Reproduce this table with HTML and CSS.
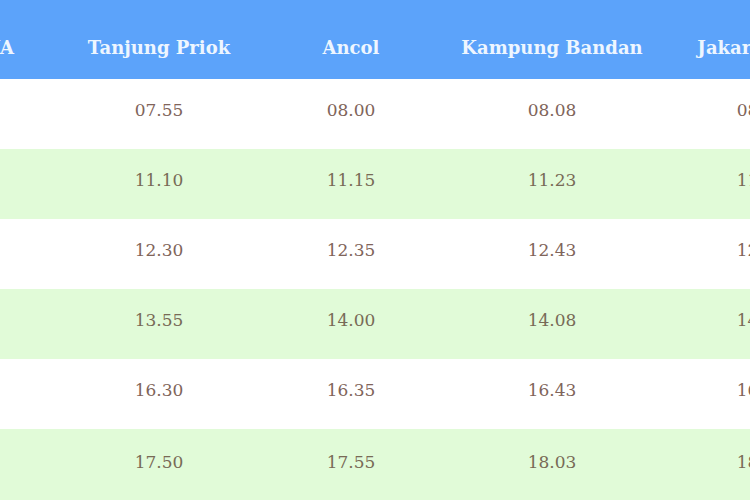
FILE: index.html
```html
<!DOCTYPE html>
<html>
<head>
<meta charset="utf-8">
<link rel="stylesheet" href="styles.css">
</head>
<body>
<div class="viewport">
  <div class="schedule">
    <div class="row head">
      <div class="cell">Nomor KA</div>
      <div class="cell">Tanjung Priok</div>
      <div class="cell">Ancol</div>
      <div class="cell">Kampung Bandan</div>
      <div class="cell">Jakarta Kota</div>
    </div>
    <div class="row">
      <div class="cell">1771</div>
      <div class="cell">07.55</div>
      <div class="cell">08.00</div>
      <div class="cell">08.08</div>
      <div class="cell">08.15</div>
    </div>
    <div class="row alt">
      <div class="cell">1773</div>
      <div class="cell">11.10</div>
      <div class="cell">11.15</div>
      <div class="cell">11.23</div>
      <div class="cell">11.30</div>
    </div>
    <div class="row">
      <div class="cell">1775</div>
      <div class="cell">12.30</div>
      <div class="cell">12.35</div>
      <div class="cell">12.43</div>
      <div class="cell">12.50</div>
    </div>
    <div class="row alt">
      <div class="cell">1777</div>
      <div class="cell">13.55</div>
      <div class="cell">14.00</div>
      <div class="cell">14.08</div>
      <div class="cell">14.15</div>
    </div>
    <div class="row">
      <div class="cell">1779</div>
      <div class="cell">16.30</div>
      <div class="cell">16.35</div>
      <div class="cell">16.43</div>
      <div class="cell">16.50</div>
    </div>
    <div class="row alt">
      <div class="cell">1781</div>
      <div class="cell">17.50</div>
      <div class="cell">17.55</div>
      <div class="cell">18.03</div>
      <div class="cell">18.10</div>
    </div>
  </div>
</div>
</body>
</html>
```
FILE: styles.css
```css
html, body {
  margin: 0;
  padding: 0;
  background: #ffffff;
}

.viewport {
  width: 750px;
  height: 500px;
  overflow: hidden;
}

.schedule {
  margin-left: -139px;
  width: 1004px;
  font-family: "DejaVu Serif", "Liberation Serif", serif;
}

.row {
  display: grid;
  grid-template-columns: 202px 192px 192px 210px 208px;
  height: 70px;
  background: #ffffff;
  color: #80645a;
  font-size: 17px;
}

.row.alt {
  background: #e1fbd8;
  color: #786a56;
}

.row:last-child {
  height: 74px;
}

.cell {
  display: flex;
  align-items: center;
  justify-content: center;
  padding-bottom: 8px;
  white-space: nowrap;
}

.row.head {
  height: 79px;
  background: #5ca3fa;
  color: #eef6ff;
  font-size: 18px;
  font-weight: bold;
}

.row.head .cell {
  padding-bottom: 0;
  padding-top: 15px;
}
```
